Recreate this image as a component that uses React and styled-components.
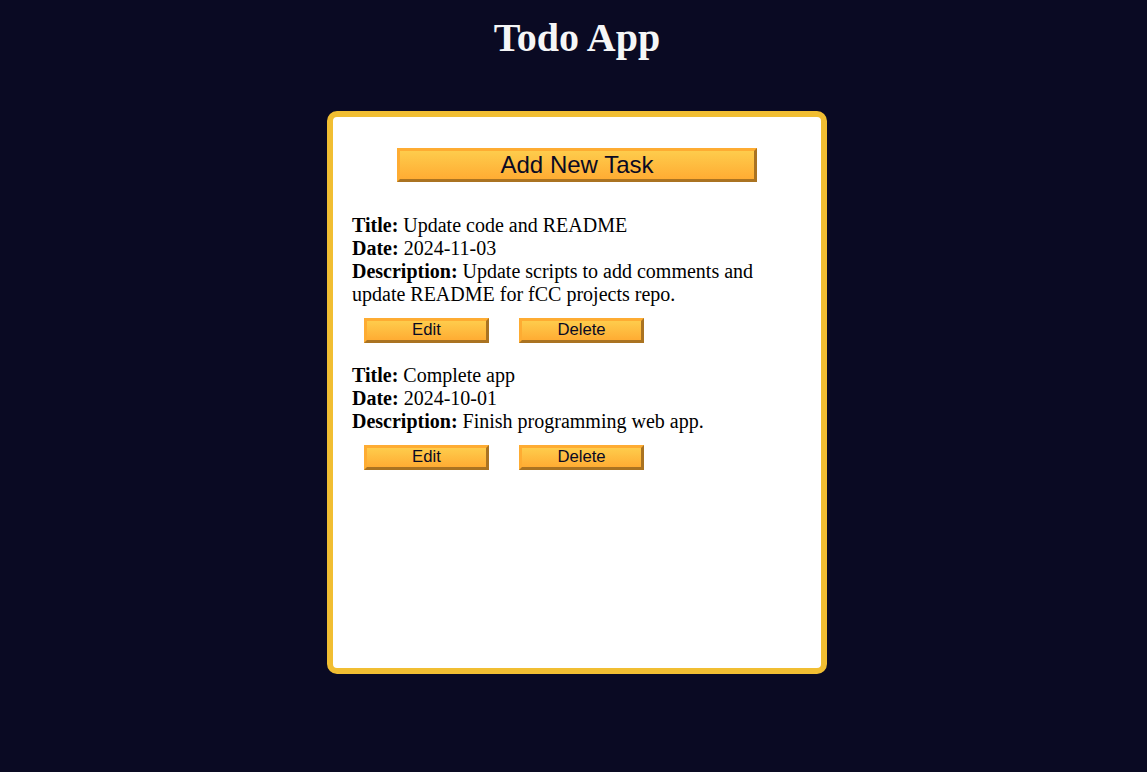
import React from "react";
import styled, { createGlobalStyle } from "styled-components";

const Global = createGlobalStyle`
  *, *::before, *::after { margin: 0; padding: 0; box-sizing: border-box; }
  html, body { background: #0a0a23; }
  body { font-family: "Liberation Serif", "Times New Roman", serif; }
`;

const Main = styled.main`
  display: flex;
  flex-direction: column;
  align-items: center;
  padding-left: 7px;
  padding-top: 15px;
  min-height: 772px;
`;

const Heading = styled.h1`
  color: #f5f6f7;
  font-family: "Liberation Serif", "Times New Roman", serif;
  font-weight: bold;
  font-size: 40px;
  line-height: 46px;
  margin-bottom: 50px;
`;

const Card = styled.div`
  background: #fff;
  width: 500px;
  height: 563px;
  border: 6px solid #f1be32;
  border-radius: 10px;
  padding: 31px 19px 0;
  display: flex;
  flex-direction: column;
`;

const Btn = styled.button`
  cursor: pointer;
  font-family: "Liberation Sans", Arial, sans-serif;
  color: #0a0a23;
  background-color: #feac32;
  background-image: linear-gradient(#fecc4c, #ffac33);
  border: 3px outset #feac32;
  padding: 0;
  line-height: 1;
  width: ${(p) => (p.$large ? "360px" : "125px")};
  height: ${(p) => (p.$large ? "34px" : "25px")};
  font-size: ${(p) => (p.$large ? "24px" : "16.7px")};
  align-self: ${(p) => (p.$large ? "center" : "auto")};
`;

const TaskList = styled.div`
  margin-top: 32px;
  display: flex;
  flex-direction: column;
  gap: 21px;
`;

const Task = styled.div`
  font-size: 20px;
  line-height: 23px;
  color: #000;
`;

const Line = styled.p`
  margin: 0;
`;

const ButtonRow = styled.div`
  display: flex;
  gap: 30px;
  padding-left: 12px;
  margin-top: 12px;
`;

const tasks = [
  {
    title: "Update code and README",
    date: "2024-11-03",
    description:
      "Update scripts to add comments and update README for fCC projects repo.",
  },
  {
    title: "Complete app",
    date: "2024-10-01",
    description: "Finish programming web app.",
  },
];

export default function App() {
  return (
    <>
      <Global />
      <Main>
        <Heading>Todo App</Heading>
        <Card>
          <Btn $large>Add New Task</Btn>
          <TaskList>
            {tasks.map((t) => (
              <Task key={t.title}>
                <Line>
                  <strong>Title:</strong> {t.title}
                </Line>
                <Line>
                  <strong>Date:</strong> {t.date}
                </Line>
                <Line>
                  <strong>Description:</strong> {t.description}
                </Line>
                <ButtonRow>
                  <Btn>Edit</Btn>
                  <Btn>Delete</Btn>
                </ButtonRow>
              </Task>
            ))}
          </TaskList>
        </Card>
      </Main>
    </>
  );
}
